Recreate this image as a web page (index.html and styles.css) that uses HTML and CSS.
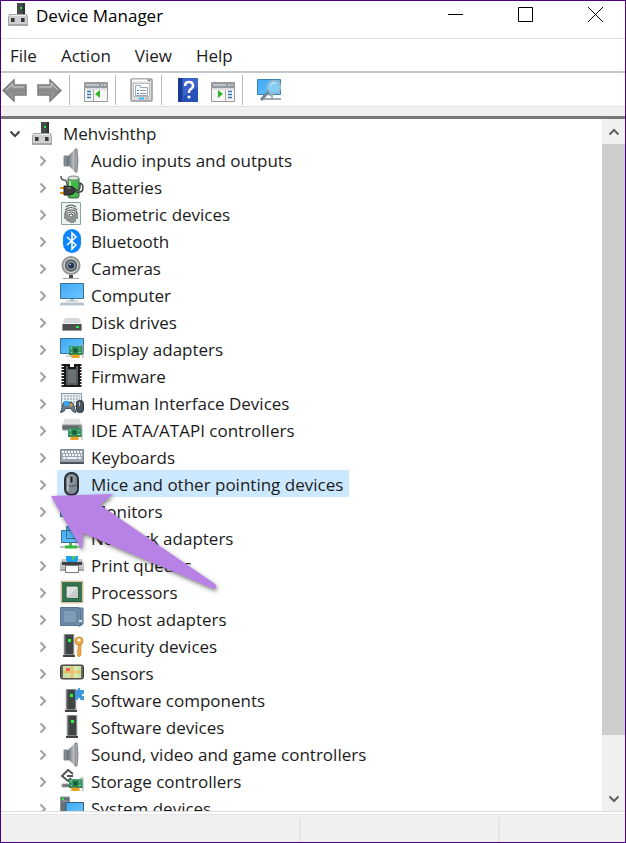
FILE: index.html
```
<!DOCTYPE html>
<html lang="en">
<head>
  <meta charset="UTF-8" />
  <meta name="viewport" content="width=device-width, initial-scale=1.0" />
  <title>Device Manager</title>
  <link rel="stylesheet" href="styles.css">
</head>
<body>
  <!-- Shared shapes -->
  <svg class="defs" aria-hidden="true">
    <defs>
      <linearGradient id="screen" x1="0" y1="0" x2="1" y2="1">
        <stop offset="0" stop-color="#3fa9f5" /><stop offset="1" stop-color="#6cc5ff" />
      </linearGradient>
      <linearGradient id="metal" x1="0" y1="0" x2="1" y2="0">
        <stop offset="0" stop-color="#777c82" /><stop offset="1" stop-color="#d0d3d6" />
      </linearGradient>
      <linearGradient id="arrow-fill" x1="0" y1="0" x2="0" y2="1">
        <stop offset="0" stop-color="#b5b5b5" /><stop offset="0.5" stop-color="#8a8a8a" /><stop offset="1" stop-color="#a5a5a5" />
      </linearGradient>
    </defs>
    <symbol id="chevron" viewBox="0 0 12 12">
      <path d="M3.5 1.5 8 6 3.5 10.5" fill="none" stroke="currentColor" stroke-width="2" />
    </symbol>
    <symbol id="machine" viewBox="0 0 20 24">
      <path d="M9 0h8v12H9z" fill="#454b4b" />
      <path d="M15 0h2v12h-2z" fill="#2c3030" />
      <path d="M12 4h2v2h-2z" fill="#2be03a" />
      <path d="M1.500 11.500h17l1 3v8H.5v-8z" fill="#cdcfd0" stroke="#a5a5a5" />
      <path d="M2 12.500h16" stroke="#eee" />
      <path d="M1 21h18v2H1z" fill="#a6a6a6" />
      <path d="M3 15h4v4H3zM13 15h4v4h-4z" fill="#3a3a3a" />
      <path d="M6 15h1v4H6zM16 15h1v4h-1z" fill="#777" />
    </symbol>
    <symbol id="tower" viewBox="0 0 13 24">
      <path d="M2 0h10v21H2z" fill="#3f4444" stroke="#c6c6c6" />
      <path d="M3 1h1v19H3z" fill="#596061" />
      <path d="M6 5h3v3H6z" fill="#32f23f" />
      <path d="M1 21h12v2H1z" fill="#444" />
    </symbol>
    <symbol id="speaker" viewBox="0 0 24 25">
      <path d="M4 8h5v10H4z" fill="#626b73" stroke="#8d9499" />
      <path d="M9 7 15 1v23L9 18z" fill="url(#metal)" />
      <path d="M15 1h2q2 11 0 23h-2z" fill="#a6aaad" stroke="#82878b" />
      <path d="M6 9v8" stroke="#a8b0b6" />
    </symbol>
    <symbol id="board" viewBox="0 0 14 14">
      <path d="M0 2h13v8H0z" fill="#369462" />
      <path d="M0 9.500h13" stroke="#1d6b43" />
      <path d="M10 1h3v12" fill="none" stroke="#a2a8aa" />
      <path d="M4 4h4v4H4z" fill="#1d5a3c" />
      <path d="M2 3v2M10 4v1M9 8h2M2 8h1" stroke="#8ff0a5" />
      <path d="M2 10h8v3H2z" fill="#f2ab2c" />
      <path d="M4 10v3M6 10v3M8 10v3" stroke="#d08a18" stroke-width=".6" />
    </symbol>
    <symbol id="display" viewBox="0 0 24 21">
      <path d="M.5.5h23v15H.5z" fill="url(#screen)" stroke="#3a7295" />
      <path d="M10 16h4v2h-4z" fill="#b5c3cb" />
      <path d="M6 18h12" stroke="#9fb3be" />
    </symbol>
    <symbol id="panel" viewBox="0 0 24 20">
      <path d="M.5.5h23v19H.5z" fill="#f6f6f6" stroke="#9a9a9a" />
      <path d="M1 1h22v5H1z" fill="#929aa2" />
      <path d="M2 3h13M17 3h2M20 3h2" stroke="#eee" />
      <path d="M1 7h22" stroke="#c6c6c6" />
    </symbol>
  </svg>

  <div class="window">
    <header class="titlebar">
      <svg class="app-icon" aria-hidden="true"><use href="#machine" /></svg>
      <h1>Device Manager</h1>
      <div class="caption-buttons">
        <button type="button" aria-label="Minimize">
          <svg viewBox="0 0 16 16"><path d="M0 7.5h15" /></svg>
        </button>
        <button type="button" aria-label="Maximize">
          <svg viewBox="0 0 16 16"><path d="M.5.5h14v14H.5z" /></svg>
        </button>
        <button type="button" aria-label="Close">
          <svg viewBox="0 0 16 16"><path d="m0 0 15 15M15 0 0 15" /></svg>
        </button>
      </div>
    </header>

    <nav class="menubar">
      <button type="button">File</button>
      <button type="button">Action</button>
      <button type="button">View</button>
      <button type="button">Help</button>
    </nav>

    <div class="toolbar" role="toolbar" aria-label="Tools">
      <div class="tool-group nav-tools">
        <button type="button" aria-label="Back">
          <svg viewBox="0 0 26 24"><path d="M1 12.500 12 2v5h12v10H12v6z" fill="url(#arrow-fill)" stroke="#7d7d7d" stroke-width="1.5" /><path d="m4 12 7-6v3h11" fill="none" stroke="#c8c8c8" /></svg>
        </button>
        <button type="button" aria-label="Forward">
          <svg viewBox="0 0 26 24"><path d="M25 12.500 14 2v5H2v10h12v6z" fill="url(#arrow-fill)" stroke="#7d7d7d" stroke-width="1.5" /><path d="M3 9h12V5l7 7" fill="none" stroke="#c8c8c8" /></svg>
        </button>
      </div>
      <div class="tool-group">
        <button type="button" aria-label="Show or hide console tree">
          <svg viewBox="0 0 24 24"><use href="#panel" y="4" width="24" height="20" /><path d="M9.500 12v11" stroke="#aaa" /><path d="M3 13.500h4M3 16.500h4M3 19.500h4" stroke="#3278b5" stroke-width="1.5" /><path d="M16 12v8l-5-4z" fill="#35b22c" /></svg>
        </button>
      </div>
      <div class="tool-group">
        <button type="button" aria-label="Properties">
          <svg viewBox="0 0 24 24"><rect x="1" y="1" width="21" height="22" rx="1" fill="#dedede" stroke="#999" stroke-width="1.500" /><path d="M2 2.500h15" stroke="#fff" stroke-width="2" /><path d="M18 2.500h2" stroke="#777" /><path d="M3.500 5.500h16v13h-16z" fill="#fff" stroke="#bbb" /><path d="M5.500 7.500h5v2h7v8h-12z" fill="#f8fafc" stroke="#9ca8b5" /><path d="M7 12.500h2M7 15.500h2" stroke="#2784c6" /><path d="M10 12.500h6M10 15.500h6" stroke="#999" /><path d="M9 20.500h5" stroke="#35b4f5" stroke-width="2" /><path d="M15 20.500h4" stroke="#bbb" stroke-width="2" /></svg>
        </button>
      </div>
      <div class="tool-group">
        <button type="button" aria-label="Help">
          <svg viewBox="0 0 24 24"><path d="M2 0h20v24H2z" fill="#2851b8" /><path d="M2 0h4v24H2z" fill="#173b96" /><path d="M7 0h15v9L7 19z" fill="#4970d2" opacity=".6" /><path d="M9 8q0-4 4-4t4 4q0 2-2 3-2 1-2 4" fill="none" stroke="#fff" stroke-width="2.500" /><circle cx="13" cy="19" r="1.600" fill="#fff" /></svg>
        </button>
        <button type="button" aria-label="Scan for hardware changes">
          <svg viewBox="0 0 24 24"><use href="#panel" y="4" width="24" height="20" /><path d="M14.500 12v11" stroke="#aaa" /><path d="M17 13.500h4M17 16.500h4M17 19.500h4" stroke="#3278b5" stroke-width="1.500" /><path d="M7 12v8l5-4z" fill="#35b22c" /></svg>
        </button>
      </div>
      <div class="tool-group">
        <button type="button" aria-label="Search devices">
          <svg viewBox="0 0 24 24"><path d="M.5 1.500h23v15H.5z" fill="url(#screen)" stroke="#3785b5" /><path d="M12 17h3v3M6 21h18" stroke="#a0acb4" stroke-width="2" fill="none" /><path d="m12 13-8 9" stroke="#71899a" stroke-width="3" /><circle cx="17" cy="9" r="6.500" fill="#83ccf4" stroke="#9bb9c9" stroke-width="1.500" /><path d="M13 8q2-4 6-3" stroke="#ddf4ff" fill="none" /></svg>
        </button>
      </div>
    </div>

    <main class="content">
      <div class="tree-pane">
        <ul class="tree">
          <li class="row root">
            <button class="toggle open" type="button" aria-label="Collapse Mehvishthp"><svg><use href="#chevron" /></svg></button>
            <span class="item"><svg class="icon" viewBox="0 0 20 24"><use href="#machine" /></svg>Mehvishthp</span>
          </li>
          <li class="row">
            <button class="toggle" type="button" aria-label="Expand"><svg><use href="#chevron" /></svg></button>
            <span class="item"><svg class="icon" viewBox="0 0 24 25"><use href="#speaker" /></svg>Audio inputs and outputs</span>
          </li>
          <li class="row">
            <button class="toggle" type="button" aria-label="Expand"><svg><use href="#chevron" /></svg></button>
            <span class="item"><svg class="icon" viewBox="0 0 24 25"><rect x="8" y="2" width="11" height="21" rx="2" fill="#41b649" stroke="#47614a" /><ellipse cx="13.500" cy="3" rx="5.500" ry="2" fill="#dce4de" stroke="#7d8a80" /><path d="M10 6v6" stroke="#a7eda3" stroke-width="2" /><path d="M1 1q0 4 3 4t3 5" fill="none" stroke="#555" stroke-width="1.500" /><path d="M0 13h5M0 18h5" stroke="#e69813" stroke-width="2" /><path d="M4 11h4q6 0 8 4-2 5-8 5H4z" fill="#3c3c3c" stroke="#222" /><path d="M15 15q5 1 5-3V8q3 1 3 5 0 5-7 4" fill="none" stroke="#42464a" stroke-width="1.500" /><path d="M7 13h4" stroke="#8b8b8b" /></svg>Batteries</span>
          </li>
          <li class="row">
            <button class="toggle" type="button" aria-label="Expand"><svg><use href="#chevron" /></svg></button>
            <span class="item"><svg class="icon" viewBox="0 0 24 25"><path d="M1.500.5h19v22h-19z" fill="#edf3f1" stroke="#8ba59c" /><g fill="none" stroke="#4c5250" stroke-width="1.200"><path d="M6 5q5-4 10 0M5 8q6-5 12 0M5 17v-5q0-4 6-4t6 4v5M7 19v-7q0-2 4-2t4 2v8M9 20v-7q0-1 2-1t2 1v8M11 14v7" /></g></svg>Biometric devices</span>
          </li>
          <li class="row">
            <button class="toggle" type="button" aria-label="Expand"><svg><use href="#chevron" /></svg></button>
            <span class="item"><svg class="icon" viewBox="0 0 24 25"><rect x="3" y="0" width="18" height="24" rx="9" fill="#0a84ff" /><path d="m7 8 9 8-4 4V4l4 4-9 8" fill="none" stroke="#fff" stroke-width="1.600" /></svg>Bluetooth</span>
          </li>
          <li class="row">
            <button class="toggle" type="button" aria-label="Expand"><svg><use href="#chevron" /></svg></button>
            <span class="item"><svg class="icon" viewBox="0 0 24 25"><path d="M9 19h4v3h6v1H3v-1h6z" fill="#a7a7a7" /><path d="M9 19h4v3H9z" fill="#484848" /><circle cx="11" cy="9.500" r="8.500" fill="#d9d9d9" stroke="#959595" stroke-width="2" /><circle cx="11" cy="9.500" r="5.500" fill="#8a929a" stroke="#555b61" stroke-width="1.500" /><circle cx="11" cy="9.500" r="3" fill="#24364c" /><circle cx="10" cy="8.500" r="1" fill="#91b8e8" /></svg>Cameras</span>
          </li>
          <li class="row">
            <button class="toggle" type="button" aria-label="Expand"><svg><use href="#chevron" /></svg></button>
            <span class="item"><svg class="icon" viewBox="0 0 24 25"><use href="#display" width="24" height="21" /><path d="M1 20h22l1 2H0z" fill="#c3d2dc" stroke="#8397a5" stroke-width=".5" /></svg>Computer</span>
          </li>
          <li class="row">
            <button class="toggle" type="button" aria-label="Expand"><svg><use href="#chevron" /></svg></button>
            <span class="item"><svg class="icon" viewBox="0 0 24 25"><path d="M5 8h14l3 6H2z" fill="#d8d8d8" /><path d="M2.500 13.500h19v7h-19z" fill="#4a4e4f" stroke="#999" /><path d="M2 13.500h20" stroke="#f1f1f1" /><path d="M16 16h3v2h-3z" fill="#2ce939" /></svg>Disk drives</span>
          </li>
          <li class="row">
            <button class="toggle" type="button" aria-label="Expand"><svg><use href="#chevron" /></svg></button>
            <span class="item"><svg class="icon" viewBox="0 0 24 25"><use href="#display" y="1" width="24" height="21" /><use href="#board" x="9" y="7" width="15" height="15" /></svg>Display adapters</span>
          </li>
          <li class="row">
            <button class="toggle" type="button" aria-label="Expand"><svg><use href="#chevron" /></svg></button>
            <span class="item"><svg class="icon" viewBox="0 0 24 25"><path d="M3 0v23M20 0v23" stroke="#222" stroke-width="3" stroke-dasharray="2 1" /><path d="M5 1h4v3h6V1h4v21H5z" fill="#555b60" stroke="#171717" stroke-width="2" /><path d="M8 6h8v13H8z" fill="#6c7174" /></svg>Firmware</span>
          </li>
          <li class="row">
            <button class="toggle" type="button" aria-label="Expand"><svg><use href="#chevron" /></svg></button>
            <span class="item"><svg class="icon" viewBox="0 0 24 25"><path d="M1.500 2.500h20v13h-20z" fill="#e6ebee" stroke="#8c9aa5" /><path d="M4 5h16M4 8h16M4 11h16" stroke="#8797a3" stroke-dasharray="2 1" /><path d="m.5 21.500 3-10q3-2 4.500 1 2-3 5 0l3 9q-4 0-5-4H5.500q-1 4-5 4z" fill="#6d7a87" stroke="#48535e" /><path d="M4 10h5v5H4z" fill="#35a8f2" /><circle cx="11" cy="14" r="1.500" fill="#e49a3d" /><rect x="16.500" y="9.500" width="7" height="12" rx="3" fill="#4b5661" stroke="#2c3238" /><path d="M19.500 11v4" stroke="#abc" /></svg>Human Interface Devices</span>
          </li>
          <li class="row">
            <button class="toggle" type="button" aria-label="Expand"><svg><use href="#chevron" /></svg></button>
            <span class="item"><svg class="icon" viewBox="0 0 24 25"><path d="M5 1h14l3 6H2z" fill="#e2e2e2" /><path d="M2.500 7h19v5h-19z" fill="#666c6c" stroke="#999" /><use href="#board" x="8" y="8" width="15" height="15" /></svg>IDE ATA/ATAPI controllers</span>
          </li>
          <li class="row">
            <button class="toggle" type="button" aria-label="Expand"><svg><use href="#chevron" /></svg></button>
            <span class="item"><svg class="icon" viewBox="0 0 24 25"><path d="M.5 4.500h23v14H.5z" fill="#9aa6b1" stroke="#7d8993" /><path d="M0 17h24v2H0z" fill="#4b545b" /><g stroke="#f3f6f8" stroke-width="2" stroke-dasharray="2 1"><path d="M2 7h20M3 10h19" /></g><path d="M3 13h3M7 13h10M18 13h3" stroke="#f3f6f8" stroke-width="2" /></svg>Keyboards</span>
          </li>
          <li class="row selected">
            <button class="toggle" type="button" aria-label="Expand"><svg><use href="#chevron" /></svg></button>
            <span class="item"><svg class="icon" viewBox="0 0 24 25"><rect x="5" y="1" width="13" height="22" rx="6" fill="#7f8b95" stroke="#2c3034" stroke-width="2" /><path d="M6 13q6 3 11 0" stroke="#4c555d" fill="none" /><path d="M8 6v13" stroke="#aab5be" stroke-width="2" /><rect x="10" y="4" width="3" height="7" rx="1" fill="#222" stroke="#ccd" stroke-width=".6" /></svg>Mice and other pointing devices</span>
            <svg class="pointer" viewBox="0 0 176 104" aria-hidden="true">
              <path d="M4 6 66 4 53 15 168 94Q171 97 167 99L36 43 35 60Z" />
            </svg>
          </li>
          <li class="row">
            <button class="toggle" type="button" aria-label="Expand"><svg><use href="#chevron" /></svg></button>
            <span class="item"><svg class="icon" viewBox="0 0 24 25"><use href="#display" y="2" width="24" height="21" /></svg>Monitors</span>
          </li>
          <li class="row">
            <button class="toggle" type="button" aria-label="Expand"><svg><use href="#chevron" /></svg></button>
            <span class="item"><svg class="icon" viewBox="0 0 24 25"><path d="M6.500.5h14v12h-14zM1.500 4.500h16v12h-16z" fill="url(#screen)" stroke="#3a7295" /><path d="M10.500 17v5" stroke="#62b65d" stroke-width="3" /><path d="M0 21h21" stroke="#b4c4ba" stroke-width="2" /><path d="M5 21h12" stroke="#32bb3a" stroke-width="3" /></svg>Network adapters</span>
          </li>
          <li class="row">
            <button class="toggle" type="button" aria-label="Expand"><svg><use href="#chevron" /></svg></button>
            <span class="item"><svg class="icon" viewBox="0 0 24 25"><path d="M6 3h12v6H6z" fill="#1ca0f2" /><path d="M11 3h5l-3 5z" fill="#57c94f" /><path d="M2 6h4l1 3h10l1-3h4l2 5v7H0v-7z" fill="#c0c4c6" /><path d="M2 9h20v3H2z" fill="#404344" /><path d="M0 17h24" stroke="#888" /><path d="M5.500 12.500h13v7h-13z" fill="#fff" stroke="#777" /></svg>Print queues</span>
          </li>
          <li class="row">
            <button class="toggle" type="button" aria-label="Expand"><svg><use href="#chevron" /></svg></button>
            <span class="item"><svg class="icon" viewBox="0 0 24 25"><path d="M1.500 1.500h21v21h-21z" fill="none" stroke="#b58c4a" stroke-width="2" stroke-dasharray="1 1" /><path d="M2 2h20v20H2z" fill="#347451" /><path d="M2 21.500h20" stroke="#235d3e" /><path d="M6 6h12v12H6z" fill="#dce0de" stroke="#27593e" /><path d="M7 18 18 7v11z" fill="#c6cac8" /></svg>Processors</span>
          </li>
          <li class="row">
            <button class="toggle" type="button" aria-label="Expand"><svg><use href="#chevron" /></svg></button>
            <span class="item"><svg class="icon" viewBox="0 0 24 25"><path d="M18 1h5v16l-3 2h-2z" fill="#7793ae" stroke="#53728f" /><path d="M.5.5h18l2 3v15H.5z" fill="#6d8cab" stroke="#557592" /><path d="M5 3h10l2 2v9l-2 2H5l-2-2V5z" fill="#7f9bb6" stroke="#5c7c9a" /><path d="M19 14h3" stroke="#d3e3ee" stroke-width="2" /></svg>SD host adapters</span>
          </li>
          <li class="row">
            <button class="toggle" type="button" aria-label="Expand"><svg><use href="#chevron" /></svg></button>
            <span class="item"><svg class="icon" viewBox="0 0 24 25"><use href="#tower" x="2" width="13" height="24" /><circle cx="19" cy="7" r="4" fill="#f0b04b" stroke="#c58c3a" /><circle cx="19" cy="6" r="1.500" fill="#fff" /><path d="M18 11h3v10l-2 2-2-2 1-2-1-2 1-1z" fill="#eaa945" stroke="#c58c3a" stroke-width=".7" /></svg>Security devices</span>
          </li>
          <li class="row">
            <button class="toggle" type="button" aria-label="Expand"><svg><use href="#chevron" /></svg></button>
            <span class="item"><svg class="icon" viewBox="0 0 24 25"><rect x=".5" y="4" width="23" height="14" rx="2" fill="#666" stroke="#3c3c3c" /><path d="M3 5h18v12H3z" fill="#cce2a1" /><path d="M3 11h18M12 5v12" stroke="#eebb60" stroke-width="2" /><path d="M16 5v12" stroke="#f7f0c1" /><path d="M6 7h4v3H6z" fill="#ef5d62" /></svg>Sensors</span>
          </li>
          <li class="row">
            <button class="toggle" type="button" aria-label="Expand"><svg><use href="#chevron" /></svg></button>
            <span class="item"><svg class="icon" viewBox="0 0 24 25"><use href="#tower" x="4" y="1" width="13" height="24" /><path d="M15 2h3q-1-2 1-2t1 2h4v4q-2-1-2 1t2 1v4h-4q1-2-1-2t-1 2h-3z" fill="#3f97dc" /></svg>Software components</span>
          </li>
          <li class="row">
            <button class="toggle" type="button" aria-label="Expand"><svg><use href="#chevron" /></svg></button>
            <span class="item"><svg class="icon" viewBox="0 0 24 25"><use href="#tower" x="5" width="13" height="24" /></svg>Software devices</span>
          </li>
          <li class="row">
            <button class="toggle" type="button" aria-label="Expand"><svg><use href="#chevron" /></svg></button>
            <span class="item"><svg class="icon" viewBox="0 0 24 25"><use href="#speaker" /></svg>Sound, video and game controllers</span>
          </li>
          <li class="row">
            <button class="toggle" type="button" aria-label="Expand"><svg><use href="#chevron" /></svg></button>
            <span class="item"><svg class="icon" viewBox="0 0 24 25"><path d="M2 15h10v3H2z" fill="#666d6c" stroke="#aaa" /><path d="M13 5 8 1 2 7l6 5 3-3M7 7h6" fill="none" stroke="#505454" stroke-width="2" /><use href="#board" x="9" y="8" width="15" height="15" /></svg>Storage controllers</span>
          </li>
          <li class="row">
            <button class="toggle" type="button" aria-label="Expand"><svg><use href="#chevron" /></svg></button>
            <span class="item"><svg class="icon" viewBox="0 0 24 25"><path d="M.5 1h9v21h-9z" fill="#697074" stroke="#8d969b" /><path d="M2 5h6" stroke="#aaa" /><path d="M2 2h2v2H2z" fill="#32f23f" /><path d="M6 6.500h17.500V19H6z" fill="url(#screen)" stroke="#2f5f7d" /></svg>System devices</span>
          </li>
        </ul>
      </div>

      <div class="scrollbar">
        <button class="scroll-up" type="button" aria-label="Scroll up"><svg><use href="#chevron" /></svg></button>
        <div class="track"><div class="thumb"></div></div>
        <button class="scroll-down" type="button" aria-label="Scroll down"><svg><use href="#chevron" /></svg></button>
      </div>
    </main>

    <footer class="statusbar">
      <div class="status-main"></div>
      <div class="status-mid"></div>
      <div class="status-end"></div>
    </footer>
  </div>
</body>
</html>
```
FILE: styles.css
```
:root {
  --frame: #4b0082;
  --face: #f0f0f0;
  --line: #e5e5e5;
  --text: #1b1b1b;
  --select: #cce8ff;
  --pointer: #b781e6;
}

* {
  box-sizing: border-box;
}

body {
  margin: 0;
  color: var(--text);
  font-family: 'Open Sans', 'Noto Sans', sans-serif;
  font-size: 17px;
}

button {
  display: flex;
  align-items: center;
  justify-content: center;
  padding: 0;
  border: 0;
  background: none;
  color: inherit;
  font: inherit;
}

.defs {
  position: absolute;
  width: 0;
  height: 0;
}

.window {
  display: flex;
  flex-direction: column;
  height: 100vh;
  border: 1px solid var(--frame);
  background: #fff;
  overflow: hidden;
}

/* Title bar */
.titlebar {
  display: flex;
  align-items: flex-start;
  height: 38px;
  padding: 2px 21px 0 7px;
  border-bottom: 1px solid var(--line);
}

.app-icon {
  width: 20px;
  height: 24px;
  margin-right: 8px;
}

h1 {
  flex: 1;
  margin: 0;
  color: #000;
  font-size: 17px;
  font-weight: 400;
  line-height: 26px;
}

.caption-buttons {
  display: flex;
  gap: 54px;
  padding-top: 4px;
}

.caption-buttons svg {
  width: 16px;
  height: 16px;
  fill: none;
  stroke: #000;
}

/* Menu */
.menubar {
  display: flex;
  gap: 24px;
  height: 34px;
  padding-left: 9px;
  border-bottom: 2px solid #c4c8ca;
}

/* Toolbar */
.toolbar {
  display: flex;
  height: 46px;
  padding: 2px 0 0 1px;
  border-bottom: 3px solid #777;
  background: linear-gradient(#fff 33px, #e2e2e2 33px, #e2e2e2 34px, var(--face) 34px);
}

.tool-group {
  display: flex;
  gap: 11px;
  height: 30px;
  padding: 0 7px 0 14px;
  border-left: 1px solid #bbb;
}

.nav-tools {
  gap: 8px;
  padding-left: 0;
  border-left: 0;
}

.toolbar svg {
  width: 24px;
  height: 24px;
}

.nav-tools svg {
  width: 26px;
}

/* Device tree */
.content {
  display: flex;
  flex: 1;
  min-height: 0;
}

.tree-pane {
  flex: 1;
  overflow: hidden;
}

.tree {
  margin: 0;
  padding: 0;
  list-style: none;
}

.row {
  display: flex;
  position: relative;
  height: 27px;
  padding-left: 34px;
  line-height: 25px;
  white-space: nowrap;
}

.row.root {
  padding-left: 6px;
}

.toggle {
  width: 16px;
  margin-right: 6px;
  padding-top: 2px;
  color: #a0a0a0;
}

.toggle svg,
.scrollbar svg {
  width: 12px;
  height: 12px;
}

.toggle.open {
  color: #404040;
}

.toggle.open svg {
  transform: rotate(90deg);
}

.item {
  display: flex;
  align-items: center;
  padding: 2px 6px 0 3px;
}

.icon {
  width: 24px;
  height: 25px;
  margin-right: 7px;
}

.root .icon {
  width: 20px;
  height: 24px;
  margin-right: 11px;
}

.selected {
  z-index: 1;
}

.selected .item {
  background: var(--select);
}

/* Arrow lying over the rows below the selected one */
.pointer {
  position: absolute;
  top: 20px;
  left: 46px;
  width: 176px;
  height: 104px;
  filter: drop-shadow(1px 2px 2px rgba(0, 0, 0, 0.5));
  pointer-events: none;
}

.pointer path {
  fill: var(--pointer);
}

/* Scrollbar */
.scrollbar {
  display: flex;
  flex-direction: column;
  width: 23px;
  background: var(--face);
  color: #606060;
}

.scrollbar button {
  height: 25px;
}

.scroll-up svg {
  transform: rotate(-90deg);
}

.scroll-down svg {
  transform: rotate(90deg);
}

.track {
  flex: 1;
}

.thumb {
  height: 92%;
  background: #cdcdcd;
}

/* Status bar */
.statusbar {
  display: flex;
  height: 31px;
  padding-top: 6px;
  border-top: 1px solid #dcdcdc;
  background: linear-gradient(#fff 2px, var(--line) 2px, var(--line) 3px, var(--face) 3px);
}

.status-main {
  width: 48%;
  border-right: 2px solid var(--line);
}

.status-mid {
  width: 32%;
  border-right: 2px solid var(--line);
}

.status-end {
  flex: 1;
}
```
